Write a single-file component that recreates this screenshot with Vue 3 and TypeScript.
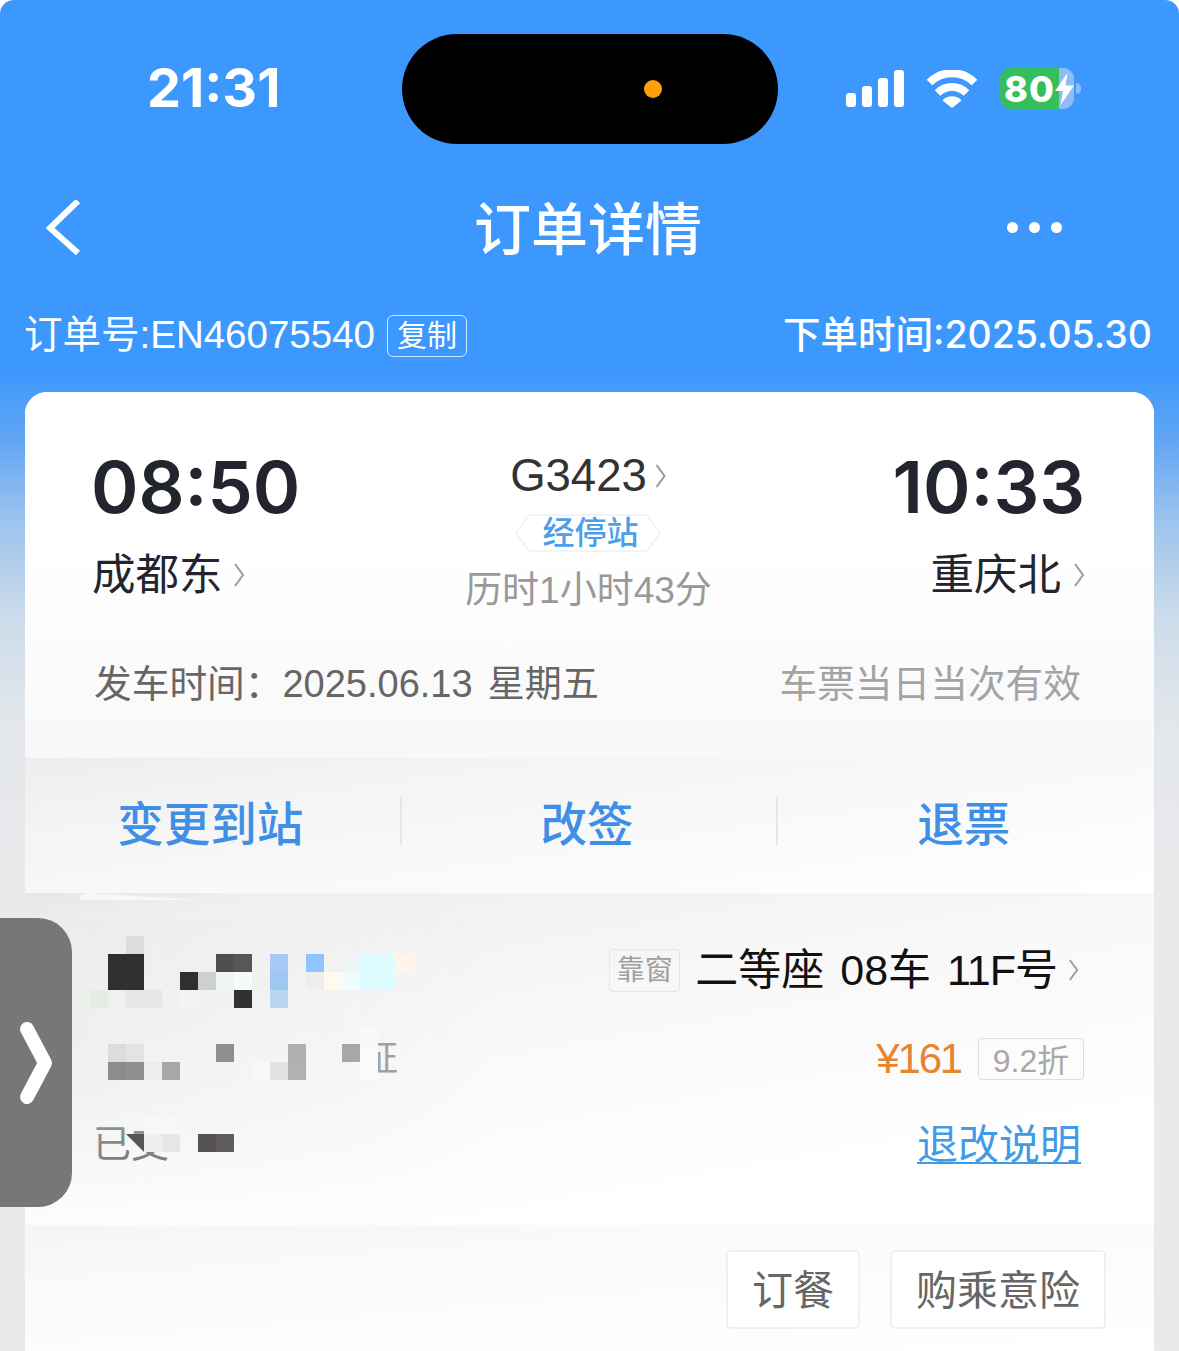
<template>
  <div class="page">
    <header class="status-bar">
      <span class="clock">21:31</span>
      <div class="island"><i class="camera-dot"></i></div>
      <div class="status-icons">
        <svg class="signal" viewBox="0 0 58 37" width="58" height="37">
          <rect x="0" y="23" width="10" height="14" rx="3" />
          <rect x="16" y="16" width="10" height="21" rx="3" />
          <rect x="32" y="8" width="10" height="29" rx="3" />
          <rect x="48" y="0" width="10" height="37" rx="3" />
        </svg>
        <svg class="wifi" viewBox="0 0 52 38" width="52" height="38">
          <path d="M3.5 12.5 A32 32 0 0 1 48.5 12.5" />
          <path d="M11.5 23 A20.5 20.5 0 0 1 40.5 23" />
          <path class="wedge" d="M16.5 30.5 A13 13 0 0 1 35.5 30.5 L26 38 Z" />
        </svg>
        <div class="battery">
          <span class="battery-level">80</span>
          <svg class="bolt" viewBox="0 0 19 32" width="19" height="32">
            <path d="M12.5 0 L0 18 L8 18 L5.5 32 L19 12.5 L10.5 12.5 Z" />
          </svg>
          <i class="battery-tip"></i>
        </div>
      </div>
    </header>

    <nav class="nav-bar">
      <svg class="back" viewBox="0 0 40 56" width="40" height="56">
        <polyline points="36,1 8,28 36,53" />
      </svg>
      <h1>订单详情</h1>
      <div class="more"><i></i><i></i><i></i></div>
    </nav>

    <div class="order-meta">
      <div class="order-no">
        <span>订单号:EN46075540</span>
        <span class="copy">复制</span>
      </div>
      <span class="order-time">下单时间:2025.05.30</span>
    </div>

    <main class="card">
      <section class="trip">
        <div class="route">
          <div class="endpoint">
            <div class="time">08:50</div>
            <div class="station">
              成都东
              <svg class="chev" viewBox="0 0 12 26" width="12" height="26"><polyline points="2,2 10,13 2,24" /></svg>
            </div>
          </div>
          <div class="train">
            <div class="train-no">
              G3423
              <svg class="chev" viewBox="0 0 12 26" width="13" height="26"><polyline points="2,2 10,13 2,24" /></svg>
            </div>
            <div class="stops">
              <svg class="stops-frame" viewBox="0 0 146 38" width="146" height="38">
                <polygon points="14,1 132,1 145,19 132,37 14,37 1,19" />
              </svg>
              <span>经停站</span>
            </div>
            <div class="duration">历时1小时43分</div>
          </div>
          <div class="endpoint right">
            <div class="time">10:33</div>
            <div class="station">
              重庆北
              <svg class="chev" viewBox="0 0 12 26" width="12" height="26"><polyline points="2,2 10,13 2,24" /></svg>
            </div>
          </div>
        </div>
        <div class="date-row">
          <span class="depart">发车时间：<span class="depart-date">2025.06.13</span><span class="weekday">星期五</span></span>
          <span class="validity">车票当日当次有效</span>
        </div>
      </section>

      <section class="actions">
        <div class="action">变更到站</div>
        <i class="divider"></i>
        <div class="action">改签</div>
        <i class="divider"></i>
        <div class="action">退票</div>
      </section>

      <section class="passenger">
        <div class="seat-row">
          <span class="tag">靠窗</span>
          <span class="seat"><span>二等座</span><span>08车</span><span class="seat-no">11F号</span></span>
          <svg class="chev" viewBox="0 0 12 26" width="11" height="26"><polyline points="2,2 10,13 2,24" /></svg>
        </div>
        <div class="id-type">证</div>
        <div class="price-row">
          <span class="price">¥161</span>
          <span class="discount">9.2折</span>
        </div>
        <div class="pay-state">已支</div>
        <a class="rules">退改说明</a>

        <!-- privacy mosaic over the name and id -->
        <div class="mosaic-wash"></div>
        <i class="edge-sliver"></i>
        <i
          v-for="(c, i) in mosaic"
          :key="i"
          class="pixel"
          :style="{ left: c[0] - 25 + 'px', top: c[1] - 893 + 'px', background: c[2] }"
        ></i>
        <i class="pixel cut"></i>
      </section>

      <section class="extras">
        <button class="extra">订餐</button>
        <button class="extra">购乘意险</button>
      </section>
    </main>

    <div class="side-handle">
      <svg viewBox="0 0 40 90" width="40" height="90">
        <polyline points="11,11 29,45 11,79" />
      </svg>
    </div>
  </div>
</template>

<script setup lang="ts">
type Cell = [number, number, string]

// x, y, colour of each mosaic block (18px grid)
const mosaic: Cell[] = [
  [126, 936, '#dcdcdf'],
  [108, 954, '#2f2f30'], [126, 954, '#323032'], [216, 954, '#4f4f50'], [234, 954, '#575757'],
  [270, 954, '#a8c9f5'], [306, 954, '#8fc4ff'], [342, 954, '#f0f6f6'], [360, 954, '#dcfbff'], [378, 954, '#ddfdff'], [396, 954, '#fff3ea'],
  [108, 972, '#303030'], [126, 972, '#323032'], [180, 972, '#2f2f2f'], [198, 972, '#cfcfcf'], [216, 972, '#eef5f3'], [234, 972, '#f6faf8'],
  [270, 972, '#9ec8f2'], [306, 972, '#eeeeee'], [324, 972, '#fff9f0'], [342, 972, '#f0fdfd'], [360, 972, '#dcfbff'], [378, 972, '#ddfdff'],
  [90, 990, '#e6ebe6'], [108, 990, '#f0f0f0'], [126, 990, '#e6e6e6'], [144, 990, '#e6e6e6'], [180, 990, '#f5f2f5'], [234, 990, '#2f322f'], [270, 990, '#b9d7f2'],
  [360, 1026, '#f8f8f8'],
  [108, 1044, '#dcdcdc'], [126, 1044, '#e4e2e4'], [144, 1044, '#f5f2f5'], [216, 1044, '#8f8d8f'], [288, 1044, '#b0aeb0'], [342, 1044, '#a8a6a8'], [360, 1044, '#fafafa'],
  [108, 1062, '#8c8c8c'], [126, 1062, '#8f918f'], [144, 1062, '#eeecee'], [162, 1062, '#a8a6a8'], [252, 1062, '#f8f6f6'], [270, 1062, '#e4e0e4'], [288, 1062, '#b2b0b2'], [360, 1062, '#fafafa'],
  [144, 1116, '#f8f7f8'], [162, 1116, '#f8f7f8'],
  [144, 1134, '#f0eef0'], [162, 1134, '#e6e6e6'], [198, 1134, '#555355'], [216, 1134, '#605c60'],
]
</script>

<style>
body {
  background: #fff;
}
</style>

<style scoped>
.page {
  position: relative;
  height: 1351px;
  overflow: hidden;
  border-radius: 14px 14px 0 0;
  font-family: "Liberation Sans", "Noto Sans CJK SC", sans-serif;
  background: linear-gradient(180deg, #3c98fd 0, #3c98fd 370px, #62a6f4 440px, #9cc3ee 520px, #cddcea 620px, #e2e6ea 720px, #eaeaec 900px);
}

.status-bar {
  height: 110px;
  padding-top: 34px;
  display: flex;
  align-items: center;
}

.clock {
  width: 402px;
  padding-left: 147px;
  box-sizing: border-box;
  color: #fff;
  font-family: Inter, sans-serif;
  font-size: 54px;
  line-height: 54px;
  font-weight: 700;
  margin-top: -2px;
}

.island {
  width: 376px;
  height: 110px;
  border-radius: 55px;
  background: #000;
  display: flex;
  align-items: center;
  justify-content: flex-end;
  padding-right: 116px;
  box-sizing: border-box;
}

.camera-dot {
  width: 18px;
  height: 18px;
  border-radius: 50%;
  background: #ff9f0a;
}

.status-icons {
  margin-left: 68px;
  display: flex;
  align-items: center;
  gap: 22px;
}

.signal {
  fill: #fff;
  margin-top: -1px;
}

.wifi {
  fill: none;
  stroke: #fff;
  stroke-width: 8;
  margin-top: -1px;
}

.wifi .wedge {
  fill: #fff;
  stroke: none;
}

.battery {
  position: relative;
  width: 74px;
  height: 41px;
  border-radius: 11px;
  background: linear-gradient(90deg, #35bf5c 0, #35bf5c 59px, #8ebcf8 59px);
  display: flex;
  align-items: center;
  color: #fff;
  margin-top: -1px;
}

.battery-level {
  font-family: Inter, sans-serif;
  font-size: 36px;
  font-weight: 800;
  letter-spacing: 1px;
  padding-left: 4px;
}

.bolt {
  fill: #fff;
  flex-shrink: 0;
}

.battery-tip {
  position: absolute;
  left: 76px;
  top: 15px;
  width: 5px;
  height: 11px;
  border-radius: 0 5px 5px 0;
  background: #8ebcf8;
}

.nav-bar {
  height: 112px;
  margin-top: 28px;
  padding: 0 42px;
  display: grid;
  grid-template-columns: 1fr auto 1fr;
  align-items: center;
}

.back {
  fill: none;
  stroke: #fff;
  stroke-width: 6;
}

.nav-bar h1 {
  margin: 4px 0 0 -3px;
  color: #fff;
  font-size: 57px;
  line-height: 64px;
  font-weight: 500;
  white-space: nowrap;
}

.more {
  justify-self: end;
  margin: -2px 75px 0 0;
  display: flex;
  gap: 11px;
}

.more i {
  width: 11px;
  height: 11px;
  border-radius: 50%;
  background: #fff;
}

.order-meta {
  margin-top: 16px;
  height: 68px;
  box-sizing: border-box;
  padding: 0 27px 6px 24px;
  display: flex;
  align-items: center;
  justify-content: space-between;
  color: #fff;
  font-size: 38.5px;
}

.order-no {
  display: flex;
  align-items: center;
  gap: 12px;
}

.copy {
  width: 80px;
  height: 42px;
  margin-top: 9px;
  box-sizing: border-box;
  border: 1px solid rgba(255, 255, 255, 0.75);
  border-radius: 6px;
  font-size: 30px;
  line-height: 40px;
  text-align: center;
}

.order-time {
  font-family: Inter, "Noto Sans CJK SC", sans-serif;
  font-weight: 500;
  font-size: 37.5px;
}

.card {
  margin: 24px 25px 0;
  border-radius: 22px 22px 0 0;
  overflow: hidden;
  background: #fff;
}

.trip {
  height: 366px;
  box-sizing: border-box;
  padding: 55px 69px 0 67px;
  background: linear-gradient(180deg, #fff 0, #fff 40%, #f8f8f9 100%);
}

.route {
  display: grid;
  grid-template-columns: 1fr auto 1fr;
}

.time {
  font-family: Inter, sans-serif;
  font-size: 72px;
  line-height: 80px;
  font-weight: 600;
  color: #22252e;
  margin-left: -1px;
}

.station {
  margin-top: 23px;
  display: flex;
  align-items: center;
  gap: 10px;
  font-size: 43.5px;
  line-height: 50px;
  color: #22252e;
}

.endpoint.right {
  text-align: right;
}

.endpoint.right .station {
  justify-content: flex-end;
  gap: 12px;
}

.chev {
  fill: none;
  stroke: #9a9a9a;
  stroke-width: 2;
}

.train {
  padding-top: 4px;
  text-align: center;
}

.train-no {
  display: flex;
  align-items: center;
  justify-content: center;
  gap: 7px;
  font-size: 45.5px;
  line-height: 50px;
  color: #333;
}

.stops {
  position: relative;
  width: 146px;
  height: 38px;
  margin: 13px auto 0;
  padding-left: 4px;
  box-sizing: border-box;
  font-size: 32px;
  line-height: 38px;
  font-weight: 500;
  color: #4a9fe8;
}

.stops span {
  position: relative;
}

.stops-frame {
  position: absolute;
  left: 0;
  top: 0;
  fill: #fff;
  stroke: #f0f4f8;
  stroke-width: 2;
}

.duration {
  margin-top: 17px;
  font-size: 37px;
  line-height: 44px;
  color: #999;
}

.date-row {
  margin-top: 49px;
  display: flex;
  justify-content: space-between;
  padding: 0 4px 0 2px;
  font-size: 37.7px;
  line-height: 44px;
}

.depart {
  color: #666;
}

.depart-date {
  font-size: 38px;
}

.weekday {
  margin-left: 15px;
  font-size: 37px;
}

.validity {
  color: #a3a3a3;
}

.actions {
  height: 135px;
  box-sizing: border-box;
  padding-bottom: 10px;
  display: flex;
  align-items: center;
  background: linear-gradient(172deg, #ededed 0, #f4f4f4 25%, #fbfbfb 70%, #fff 100%);
}

.action {
  flex: 1;
  padding-right: 5px;
  text-align: center;
  font-size: 46.5px;
  font-weight: 500;
  color: #3f8fe6;
}

.divider {
  width: 2px;
  height: 48px;
  margin-left: -1px;
  background: #e6e6e6;
}

.passenger {
  position: relative;
  height: 332px;
  box-sizing: border-box;
  padding: 55px 70px 0 70px;
  display: grid;
  grid-template-columns: 1fr auto;
  grid-template-rows: 44px 42px 44px;
  row-gap: 46px;
  background: linear-gradient(170deg, #e6e6e6 0, #efefef 8%, #f8f8f8 40%, #fff 80%);
}

.seat-row {
  grid-column: 2;
  grid-row: 1;
  justify-self: end;
  display: flex;
  align-items: center;
  margin-right: 5px;
}

.tag {
  width: 71px;
  height: 43px;
  box-sizing: border-box;
  border: 1px solid #e6e6e6;
  border-radius: 4px;
  text-align: center;
  font-size: 28px;
  line-height: 41px;
  color: #a0a0a0;
}

.seat {
  margin-left: 15px;
  display: flex;
  gap: 16px;
  font-size: 43px;
  line-height: 44px;
  color: #111;
}

.seat-no {
  letter-spacing: -1px;
}

.seat-row .chev {
  margin-left: 11px;
}

.id-type {
  grid-column: 1;
  grid-row: 2;
  padding-left: 267px;
  font-size: 36px;
  line-height: 42px;
  color: #888;
}

.price-row {
  grid-column: 2;
  grid-row: 2;
  justify-self: end;
  display: flex;
  align-items: center;
  gap: 17px;
}

.price {
  font-size: 42px;
  letter-spacing: -2.2px;
  color: #e8842e;
}

.discount {
  width: 106px;
  height: 42px;
  box-sizing: border-box;
  border: 1px solid #ddd;
  border-radius: 4px;
  text-align: center;
  font-size: 32px;
  line-height: 44px;
  color: #a8a8a8;
}

.pay-state {
  grid-column: 1;
  grid-row: 3;
  margin: -4px 0 0 -2px;
  font-size: 38px;
  line-height: 44px;
  color: #666;
}

.rules {
  grid-column: 2;
  grid-row: 3;
  justify-self: end;
  margin-right: 3px;
  margin-top: -3px;
  font-size: 41px;
  line-height: 44px;
  color: #3f9be8;
  text-decoration: underline;
  text-decoration-thickness: 2px;
  text-underline-offset: 3px;
}

.mosaic-wash {
  position: absolute;
  left: 40px;
  top: 25px;
  width: 420px;
  height: 290px;
  background: linear-gradient(90deg, rgba(232, 236, 232, 0.55), rgba(244, 240, 244, 0.3) 70%, rgba(255, 255, 255, 0));
  mask-image: linear-gradient(180deg, #000 55%, transparent);
}

.edge-sliver {
  position: absolute;
  left: 53px;
  top: 0;
  width: 122px;
  height: 7px;
  background: #f8f8f8;
  clip-path: polygon(6% 0, 100% 100%, 0 100%);
}

.pixel {
  position: absolute;
  width: 18px;
  height: 18px;
}

.pixel.cut {
  left: 101px;
  top: 241px;
  background: #555;
  clip-path: polygon(0 0, 100% 0, 100% 100%);
}

.extras {
  height: 130px;
  box-sizing: border-box;
  padding: 25px 48px 0 0;
  display: flex;
  justify-content: flex-end;
  gap: 30px;
  background: linear-gradient(175deg, #f5f5f5 0, #fafafa 30%, #fff 100%);
}

.extra {
  height: 79px;
  padding: 0 24px 6px;
  border: 2px solid #f0f0f0;
  border-radius: 5px;
  background: #fff;
  font-family: inherit;
  font-size: 41px;
  color: #666;
}

.side-handle {
  position: absolute;
  left: 0;
  top: 918px;
  width: 72px;
  height: 289px;
  border-radius: 0 34px 34px 0;
  background: #777;
  display: flex;
  align-items: center;
  padding-left: 16px;
  box-sizing: border-box;
}

.side-handle svg {
  fill: none;
  stroke: #fff;
  stroke-width: 14;
  stroke-linecap: round;
  stroke-linejoin: round;
}
</style>
